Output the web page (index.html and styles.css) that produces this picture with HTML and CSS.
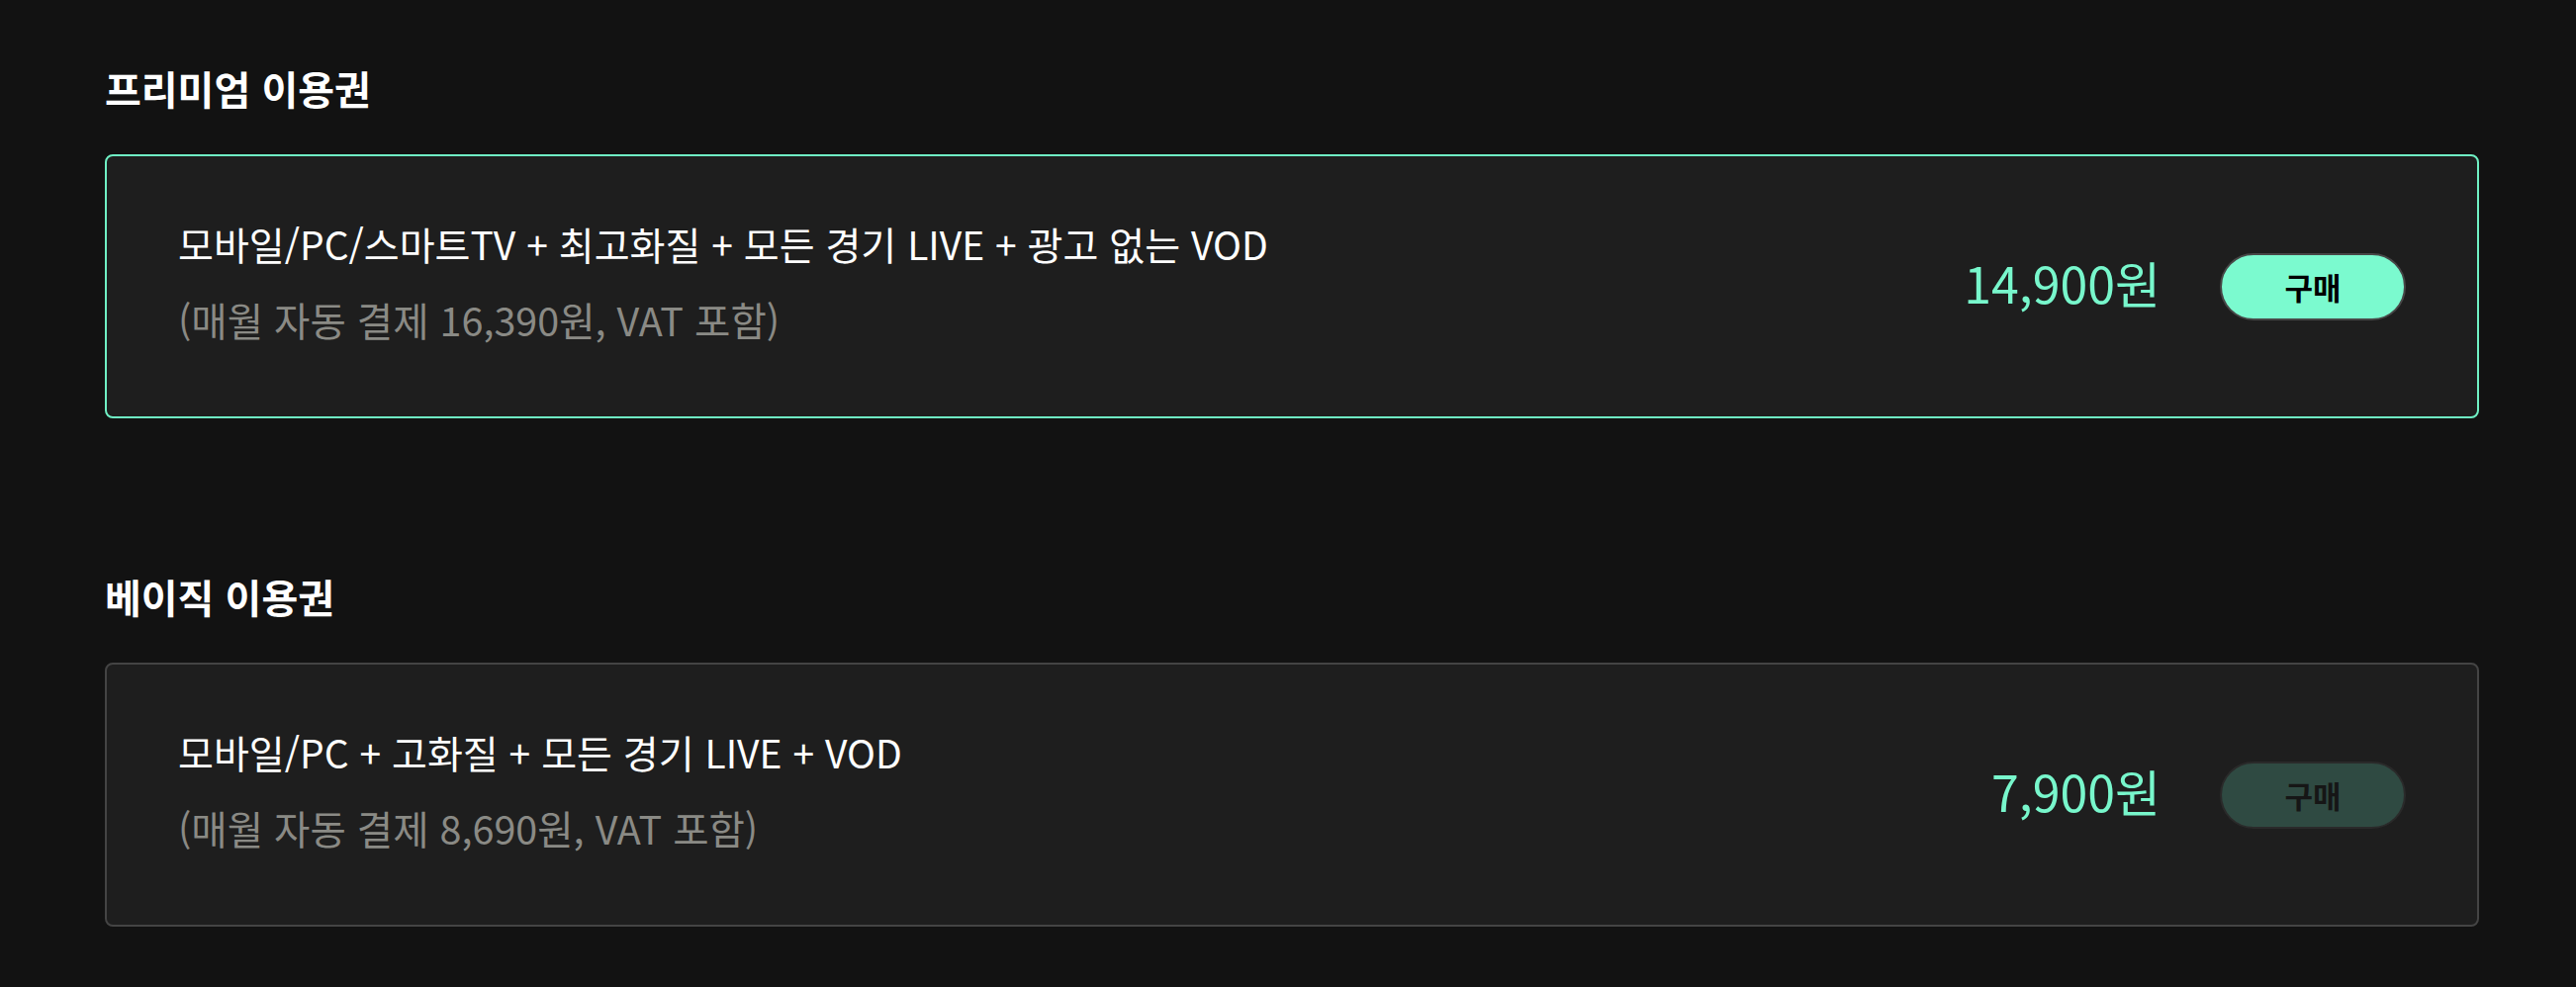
FILE: index.html
```html
<!DOCTYPE html>
<html lang="ko">
<head>
  <meta charset="UTF-8" />
  <meta name="viewport" content="width=device-width, initial-scale=1.0"/>
  <title>이용권 구매</title>
  <link rel="stylesheet" href="styles.css">
</head>
<body>
  <div class="container">
    <section class="plan-group">
      <h2>프리미엄 이용권</h2>
      <div class="plan plan-active">
        <div class="plan-info">
          <p class="plan-name">모바일/PC/스마트TV + 최고화질 + 모든 경기 LIVE + 광고 없는 VOD</p>
          <p class="plan-note">(매월 자동 결제 16,390원, VAT 포함)</p>
        </div>
        <div class="plan-price">14,900원</div>
        <button class="buy">구매</button>
      </div>
    </section>

    <section class="plan-group">
      <h2>베이직 이용권</h2>
      <div class="plan">
        <div class="plan-info">
          <p class="plan-name">모바일/PC + 고화질 + 모든 경기 LIVE + VOD</p>
          <p class="plan-note">(매월 자동 결제 8,690원, VAT 포함)</p>
        </div>
        <div class="plan-price">7,900원</div>
        <button class="buy buy-off">구매</button>
      </div>
    </section>
  </div>
</body>
</html>
```

FILE: styles.css
```css
body {
  font-family: 'Noto Sans CJK KR', 'Noto Sans', sans-serif;
  background: #121212;
  color: #fff;
  margin: 0;
}
.container {
  width: 2400px;
  padding: 63px 0 0 106px;
}
.plan-group {
  margin-bottom: 154px;
}
.plan-group:last-child {
  margin-bottom: 0;
}
h2 {
  margin: 0 0 40px;
  font-size: 40px;
  line-height: 53px;
  font-weight: 700;
}
.plan {
  display: flex;
  align-items: center;
  box-sizing: border-box;
  height: 267px;
  padding: 0 72px;
  background: #1e1e1e;
  border: 2px solid #444;
  border-radius: 8px;
}
.plan-active {
  border-color: #6ff0c4;
}
.plan-info {
  flex: 1;
  padding-bottom: 11px;
}
.plan-name {
  margin: 0;
  font-size: 39px;
  line-height: 52px;
}
.plan-note {
  margin: 25px 0 0;
  font-size: 39.5px;
  line-height: 52px;
  color: #8a8a85;
}
.plan-price {
  font-size: 50px;
  color: #78f7cc;
  margin-right: 60px;
  padding-bottom: 10px;
}
.buy {
  width: 188px;
  height: 68px;
  border: 2px solid #474747;
  border-radius: 34px;
  background: #7bfacf;
  color: #000;
  font-family: inherit;
  font-size: 31px;
  font-weight: 700;
  cursor: pointer;
}
.buy-off {
  background: #2f4a42;
  border-color: #2a2a2a;
  color: #161616;
}
```
